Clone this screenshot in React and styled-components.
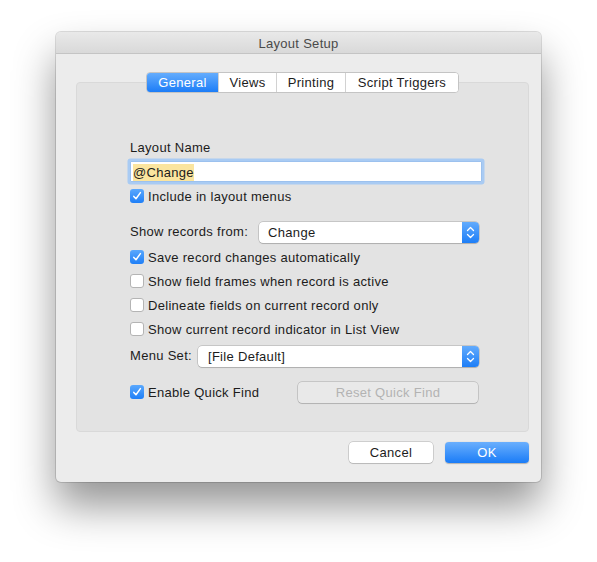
import React from 'react';
import styled, { createGlobalStyle } from 'styled-components';

const GlobalStyle = createGlobalStyle`
  html, body {
    margin: 0;
    padding: 0;
    background: #ffffff;
    font-family: 'Liberation Sans', Arial, sans-serif;
    font-size: 13px;
    letter-spacing: 0.3px;
    color: #1c1c1c;
  }
`;

const Page = styled.div`
  padding: 32px 0 0 56px;
  height: 562px;
  box-sizing: border-box;
`;

const Window = styled.div`
  width: 485px;
  height: 450px;
  background: #ececec;
  border-radius: 5px;
  box-shadow: 0 24px 42px rgba(0, 0, 0, 0.42), 0 0 0 1px rgba(0, 0, 0, 0.13);
  overflow: hidden;
  display: flex;
  flex-direction: column;
`;

const TitleBar = styled.div`
  height: 21px;
  line-height: 23px;
  text-align: center;
  color: #4a4a4a;
  background: linear-gradient(#e9e9e9, #d9d9d9);
  border-bottom: 1px solid #c4c4c4;
`;

const Body = styled.div`
  padding: 18px 12px 0 20px;
  display: flex;
  flex-direction: column;
`;

const Tabs = styled.div`
  align-self: center;
  display: flex;
  height: 19px;
  border: 1px solid #c4c4c4;
  border-radius: 4px;
  background: #fff;
  margin-bottom: -11px;
  position: relative;
  z-index: 1;
  overflow: hidden;
`;

const Tab = styled.div`
  width: ${(p) => p.w}px;
  text-align: center;
  line-height: 19px;
  color: ${(p) => (p.active ? '#ffffff' : '#1c1c1c')};
  background: ${(p) => (p.active ? 'linear-gradient(#64acfd, #1c7df7)' : '#ffffff')};
  & + & {
    border-left: 1px solid #d2d2d2;
  }
`;

const Group = styled.div`
  background: #e3e3e3;
  border: 1px solid #d9d9d9;
  border-radius: 4px;
  height: 350px;
  box-sizing: border-box;
  padding: 57px 49px 0 53px;
  display: flex;
  flex-direction: column;
`;

const Label = styled.div`
  line-height: 16px;
`;

const Field = styled.div`
  margin: 5px -3px 0 0;
  height: 21px;
  box-sizing: border-box;
  background: #fff;
  border: 1px solid #9cc1ee;
  box-shadow: 0 0 0 2.5px #a9cbf3;
  border-radius: 1px;
  display: flex;
  align-items: center;
  padding: 1px 0 0 2px;
`;

const Selected = styled.span`
  background: #fbe59f;
  line-height: 17px;
`;

const Row = styled.div`
  height: 24px;
  display: flex;
  align-items: center;
  margin-top: ${(p) => p.mt || 0}px;
`;

const Box = styled.span`
  width: 14px;
  height: 14px;
  box-sizing: border-box;
  border-radius: 3px;
  margin-right: 4px;
  flex: none;
  display: flex;
  align-items: center;
  justify-content: center;
  background: ${(p) => (p.checked ? 'linear-gradient(#5aa8fd, #1f7ff7)' : '#ffffff')};
  border: ${(p) => (p.checked ? 'none' : '1px solid #b4b4b4')};
`;

const Popup = styled.div`
  flex: 1;
  height: 21px;
  box-sizing: border-box;
  margin-left: ${(p) => p.ml}px;
  background: #fff;
  border-radius: 4px;
  box-shadow: 0 0 0 0.5px rgba(0, 0, 0, 0.25), 0 1px 1px rgba(0, 0, 0, 0.12);
  display: flex;
  align-items: center;
  overflow: hidden;
`;

const PopupText = styled.span`
  flex: 1;
  padding-left: ${(p) => p.pl}px;
`;

const Stepper = styled.span`
  width: 17px;
  height: 21px;
  background: linear-gradient(#62abfd, #1d7ef7);
  display: flex;
  align-items: center;
  justify-content: center;
`;

const PushButton = styled.div`
  width: ${(p) => p.w}px;
  height: 21px;
  box-sizing: border-box;
  border-radius: 4px;
  text-align: center;
  line-height: 21px;
  margin-right: ${(p) => p.mr || 0}px;
  color: ${(p) => (p.primary ? '#ffffff' : p.disabled ? '#b3b3b3' : '#1c1c1c')};
  background: ${(p) =>
    p.primary ? 'linear-gradient(#6aaffd, #1a7cf7)' : p.disabled ? '#e9e9e9' : '#ffffff'};
  box-shadow: ${(p) =>
    p.primary ? '0 0.5px 1px rgba(0,0,0,0.25)' : '0 0 0 0.5px rgba(0,0,0,0.25), 0 1px 1px rgba(0,0,0,0.1)'};
`;

const Footer = styled.div`
  display: flex;
  justify-content: flex-end;
  gap: 12px;
  margin-top: 10px;
`;

function Check() {
  return (
    <svg width="10" height="10" viewBox="0 0 10 10">
      <path d="M1.8 5.4 L4 7.8 L8.4 1.6" fill="none" stroke="#fff" strokeWidth="1.5" strokeLinecap="round" strokeLinejoin="round" />
    </svg>
  );
}

function Checkbox({ checked, children, style }) {
  return (
    <>
      <Box checked={checked}>{checked && <Check />}</Box>
      <span style={style}>{children}</span>
    </>
  );
}

function Arrows() {
  return (
    <svg width="9" height="13" viewBox="0 0 9 13">
      <path d="M1.5 4.5 L4.5 1.5 L7.5 4.5 M1.5 8.5 L4.5 11.5 L7.5 8.5" fill="none" stroke="#fff" strokeWidth="1.3" strokeLinecap="round" strokeLinejoin="round" />
    </svg>
  );
}

export default function App() {
  return (
    <>
      <GlobalStyle />
      <Page>
        <Window>
          <TitleBar>Layout Setup</TitleBar>
          <Body>
            <Tabs>
              <Tab w={71} active>General</Tab>
              <Tab w={57}>Views</Tab>
              <Tab w={68}>Printing</Tab>
              <Tab w={112}>Script Triggers</Tab>
            </Tabs>
            <Group>
              <Label>Layout Name</Label>
              <Field>
                <Selected>@Change</Selected>
              </Field>
              <Row mt={2}>
                <Checkbox checked>Include in layout menus</Checkbox>
              </Row>
              <Row mt={12}>
                <Label>Show records from:</Label>
                <Popup ml={11}>
                  <PopupText pl={9}>Change</PopupText>
                  <Stepper><Arrows /></Stepper>
                </Popup>
              </Row>
              <Row mt={1}>
                <Checkbox checked>Save record changes automatically</Checkbox>
              </Row>
              <Row>
                <Checkbox>Show field frames when record is active</Checkbox>
              </Row>
              <Row>
                <Checkbox>Delineate fields on current record only</Checkbox>
              </Row>
              <Row>
                <Checkbox>Show current record indicator in List View</Checkbox>
              </Row>
              <Row mt={3}>
                <Label>Menu Set:</Label>
                <Popup ml={6}>
                  <PopupText pl={10}>[File Default]</PopupText>
                  <Stepper><Arrows /></Stepper>
                </Popup>
              </Row>
              <Row mt={12}>
                <Checkbox checked style={{ flex: 1 }}>Enable Quick Find</Checkbox>
                <PushButton w={180} mr={1} disabled>Reset Quick Find</PushButton>
              </Row>
            </Group>
            <Footer>
              <PushButton w={84}>Cancel</PushButton>
              <PushButton w={84} primary>OK</PushButton>
            </Footer>
          </Body>
        </Window>
      </Page>
    </>
  );
}
